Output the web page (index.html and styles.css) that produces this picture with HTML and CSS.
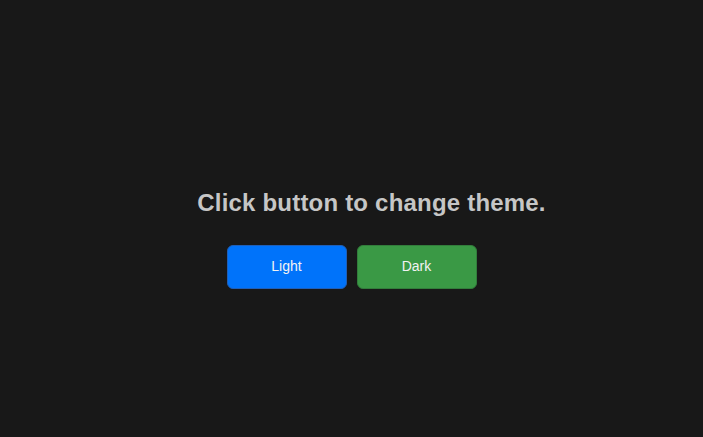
FILE: index.html
```html
<!DOCTYPE html>
<html>
<head>
<meta charset="utf-8">
<link rel="stylesheet" href="styles.css">
</head>
<body>
<main class="page">
  <h1 class="title">Click button to change theme.</h1>
  <div class="actions">
    <button class="btn btn-light">Light</button>
    <button class="btn btn-dark">Dark</button>
  </div>
</main>
</body>
</html>
```

FILE: styles.css
```css
html, body {
  margin: 0;
  padding: 0;
  background: #181818;
  height: 100%;
}
.page {
  display: flex;
  flex-direction: column;
  align-items: center;
  padding-top: 189px;
  font-family: "Liberation Sans", Arial, sans-serif;
}
.title {
  margin: 0 0 0 40px;
  font-size: 24px;
  line-height: 28px;
  letter-spacing: 0.2px;
  font-weight: bold;
  color: #c6c6c6;
}
.actions {
  display: flex;
  gap: 10px;
  margin-top: 28px;
}
.btn {
  width: 120px;
  height: 44px;
  padding: 0 0 2px;
  border-radius: 6px;
  font-family: "Liberation Sans", Arial, sans-serif;
  font-size: 14px;
  color: #f2f2f2;
  cursor: pointer;
}
.btn-light {
  background: #0073fa;
  border: 1px solid #1f5fb8;
}
.btn-dark {
  background: #3a9945;
  border: 1px solid #327d3b;
}
```
